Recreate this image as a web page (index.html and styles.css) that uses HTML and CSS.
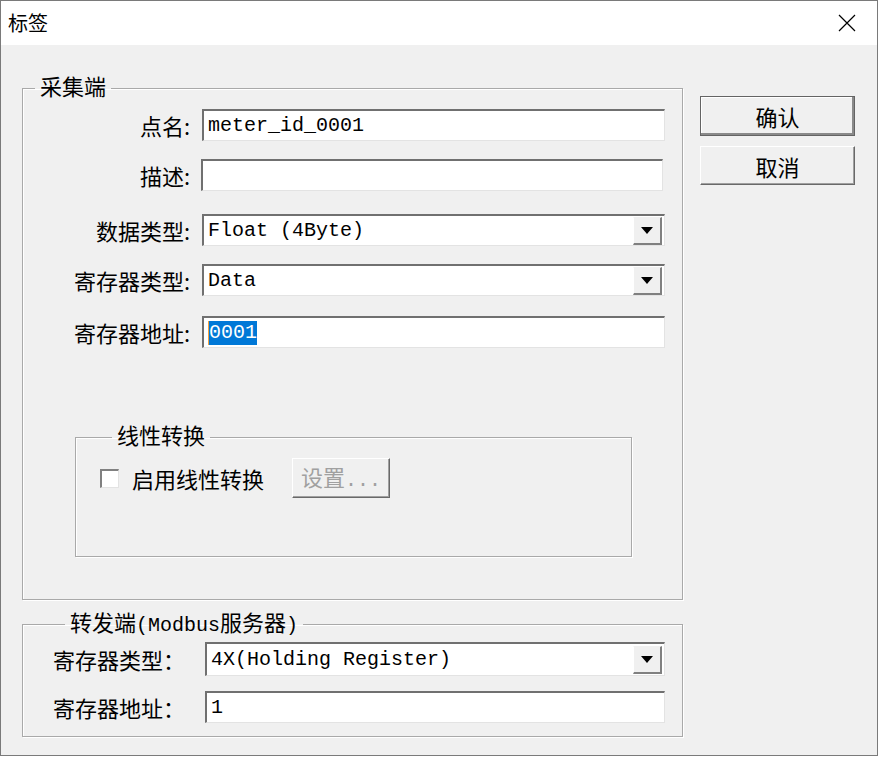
FILE: index.html
```html
<!DOCTYPE html>
<html lang="zh-CN">
<head>
    <meta charset="UTF-8">
    <meta name="viewport" content="width=device-width, initial-scale=1.0">
    <title>标签</title>
    <link rel="stylesheet" href="styles.css">
</head>
<body>
    <div class="window">
        <div class="titlebar">
            <span class="title">标签</span>
            <svg class="close" width="18" height="18" viewBox="0 0 18 18">
                <path d="M1 1 L17 17 M17 1 L1 17" stroke="#000" stroke-width="1.2" fill="none"/>
            </svg>
        </div>

        <div class="content">
            <div class="groups">
                <fieldset class="group group-collect">
                    <legend>采集端</legend>

                    <div class="row">
                        <label class="label">点名:</label>
                        <div class="field"><span class="mono">meter_id_0001</span></div>
                    </div>
                    <div class="row row-desc">
                        <label class="label">描述:</label>
                        <div class="field field-desc"></div>
                    </div>
                    <div class="row">
                        <label class="label">数据类型:</label>
                        <div class="field combo">
                            <span class="mono">Float (4Byte)</span>
                            <span class="arrow"></span>
                        </div>
                    </div>
                    <div class="row row-type">
                        <label class="label">寄存器类型:</label>
                        <div class="field combo">
                            <span class="mono">Data</span>
                            <span class="arrow"></span>
                        </div>
                    </div>
                    <div class="row row-addr">
                        <label class="label">寄存器地址:</label>
                        <div class="field"><span class="mono selected">0001</span></div>
                    </div>

                    <fieldset class="group group-linear">
                        <legend>线性转换</legend>
                        <div class="check-row">
                            <span class="checkbox"></span>
                            <span class="check-label">启用线性转换</span>
                            <button class="btn btn-disabled" disabled>设置<span class="mono">...</span></button>
                        </div>
                    </fieldset>
                </fieldset>

                <fieldset class="group group-forward">
                    <legend>转发端<span class="mono">(Modbus</span>服务器<span class="mono">)</span></legend>

                    <div class="row row-left">
                        <label class="label">寄存器类型：</label>
                        <div class="field combo combo-tall">
                            <span class="mono">4X(Holding Register)</span>
                            <span class="arrow"></span>
                        </div>
                    </div>
                    <div class="row row-left">
                        <label class="label">寄存器地址：</label>
                        <div class="field field-short"><span class="mono">1</span></div>
                    </div>
                </fieldset>
            </div>

            <div class="actions">
                <button class="btn btn-default">确认</button>
                <button class="btn">取消</button>
            </div>
        </div>
    </div>
</body>
</html>
```

FILE: styles.css
```css
body {
    margin: 0;
    background-color: #ffffff;
    font-family: "Noto Sans CJK SC", sans-serif;
    color: #000;
}

.window {
    width: 878px;
    height: 756px;
    box-sizing: border-box;
    border: 1px solid #7a7a7a;
    background-color: #f0f0f0;
    display: flex;
    flex-direction: column;
}

.titlebar {
    height: 44px;
    background-color: #ffffff;
    display: flex;
    align-items: center;
    justify-content: space-between;
    padding: 0 21px 0 7px;
}

.title {
    font-size: 20px;
    line-height: 24px;
}

.content {
    display: flex;
    padding-left: 21px;
}

.groups {
    width: 661px;
}

.group {
    margin: 0;
    border: 1px solid #a9a9a9;
    box-shadow: 1px 1px 0 #ffffff, inset 1px 1px 0 #ffffff;
    min-width: 0;
}

/* texto un poco más arriba que la línea, como en Windows */
.group legend {
    font-size: 22px;
    line-height: 18px;
    height: 24px;
    padding: 0 5px;
    margin-left: 12px;
}

.group legend .mono {
    line-height: 18px;
}

.group-collect {
    margin-top: 31px;
    padding: 9px 17px 42px 0;
}

.row {
    display: flex;
    align-items: center;
    margin-bottom: 18px;
}

.row-desc {
    margin-bottom: 23px;
}

.row-type {
    margin-bottom: 20px;
}

.row-addr {
    margin-bottom: 0;
}

.label {
    width: 167px;
    margin-right: 12px;
    text-align: right;
    font-size: 22px;
    line-height: 32px;
    white-space: nowrap;
}

.field {
    flex: 1;
    height: 32px;
    box-sizing: border-box;
    background-color: #ffffff;
    border-style: solid;
    border-width: 2px 1px 1px 2px;
    border-color: #707070 #e3e3e3 #e3e3e3 #707070;
    display: flex;
    align-items: center;
    padding-left: 4px;
}

.field-desc {
    margin-left: -1px;
    margin-right: 2px;
}

.mono {
    font-family: "Liberation Mono", "Noto Sans CJK SC", monospace;
    font-size: 20px;
    line-height: 24px;
}

.selected {
    background-color: #0078d7;
    color: #ffffff;
    border-left: 1px solid #f7a23c;
}

.combo {
    justify-content: space-between;
    padding-right: 2px;
}

.arrow {
    width: 29px;
    height: 28px;
    box-sizing: border-box;
    background-color: #f0f0f0;
    border-style: solid;
    border-width: 1px 2px 2px 1px;
    border-color: #f0f0f0 #808080 #808080 #ffffff;
    display: flex;
    align-items: center;
    justify-content: center;
}

.arrow::after {
    content: "";
    border-left: 6px solid transparent;
    border-right: 6px solid transparent;
    border-top: 7px solid #000;
}

.group-linear {
    margin: 77px 0 0 52px;
    width: 557px;
    box-sizing: border-box;
    padding: 9px 0 58px 24px;
}

.check-row {
    display: flex;
    align-items: center;
}

.checkbox {
    width: 19px;
    height: 19px;
    box-sizing: border-box;
    background-color: #ffffff;
    border-style: solid;
    border-width: 2px 1px 1px 2px;
    border-color: #808080 #e3e3e3 #e3e3e3 #808080;
}

.check-label {
    font-size: 22px;
    line-height: 32px;
    margin: 0 26px 0 13px;
}

.btn {
    font-family: "Noto Sans CJK SC", sans-serif;
    font-size: 22px;
    line-height: 26px;
    color: #000;
    background-color: #f0f0f0;
    box-sizing: border-box;
    border-style: solid;
    border-width: 1px;
    border-color: #ffffff #696969 #696969 #ffffff;
    box-shadow: inset -1px -1px 0 #a0a0a0;
    padding: 0;
}

.btn-disabled {
    width: 98px;
    height: 40px;
    color: #a0a0a0;
    margin-left: 2px;
}

.group-forward {
    margin-top: 12px;
    padding: 6px 17px 13px 30px;
}

.row-left .label {
    width: 152px;
    margin-right: 0;
    text-align: left;
}

.combo-tall {
    height: 34px;
}

.row-left {
    margin-bottom: 15px;
}

.row-left + .row-left {
    margin-bottom: 0;
}

.field-short {
    height: 32px;
}

.actions {
    display: flex;
    flex-direction: column;
    gap: 10px;
    margin: 51px 0 0 17px;
    width: 155px;
}

.actions .btn {
    height: 39px;
}

.actions .btn-default {
    height: 40px;
    border-color: #646464;
    box-shadow: inset -2px -2px 0 #8a8a8a, inset 1px 1px 0 #ffffff;
}
```
